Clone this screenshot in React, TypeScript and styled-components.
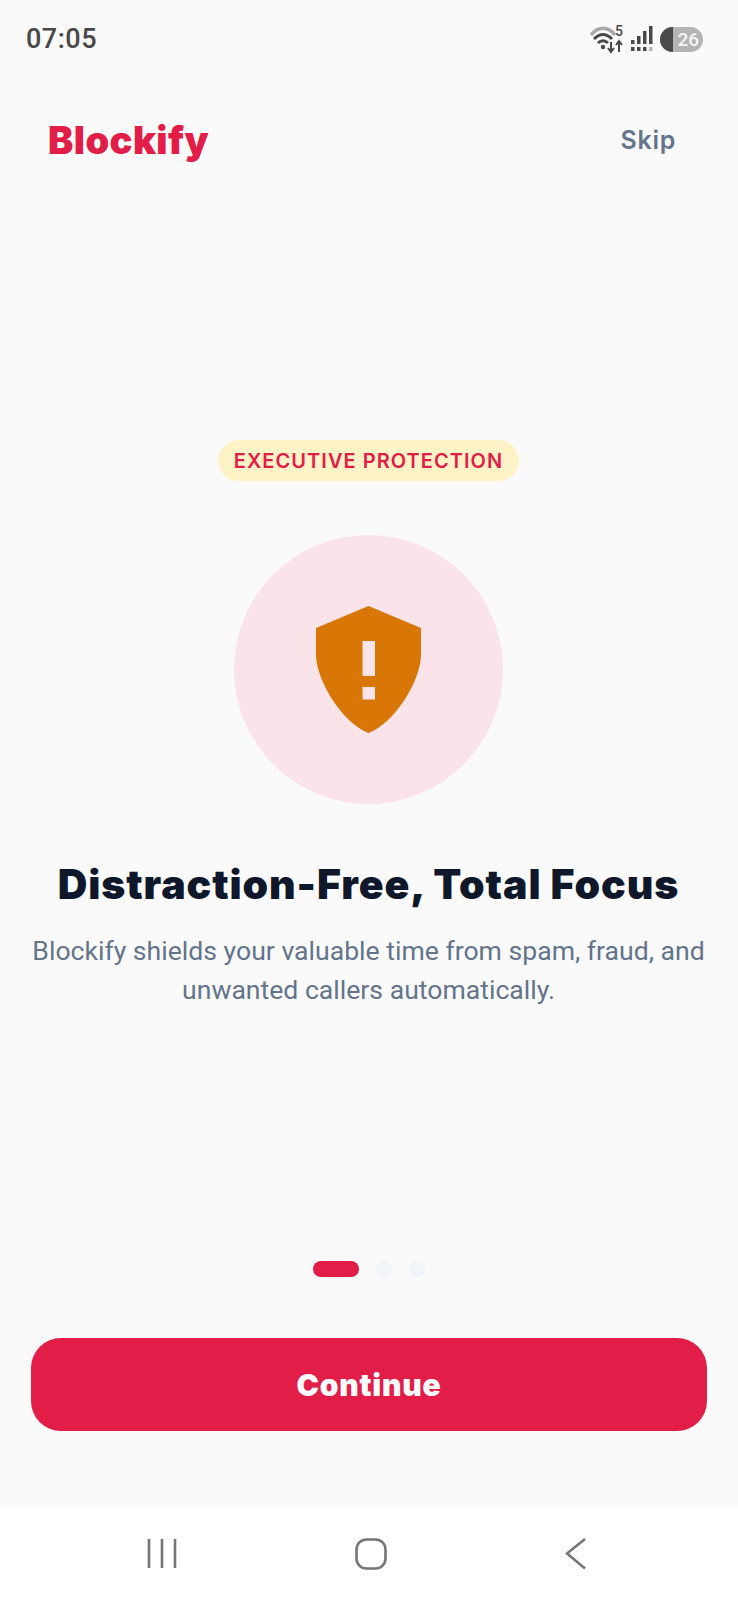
import React, { FC } from 'react';
import styled, { createGlobalStyle } from 'styled-components';

const colors = {
  page: '#fafafa',
  white: '#ffffff',
  brand: '#e11d48',
  slate: '#64748b',
  ink: '#0f172a',
  amberSoft: '#fef3c7',
  amber: '#d97706',
  roseSoft: '#fae4ea',
  dot: '#f1f5f9',
  statusInk: '#484848',
  navInk: '#767676',
};

const GlobalStyle = createGlobalStyle`
  html, body {
    margin: 0;
    padding: 0;
    background: ${colors.page};
  }
  * {
    box-sizing: border-box;
  }
`;

const Screen = styled.div`
  width: 738px;
  height: 1600px;
  display: flex;
  flex-direction: column;
  background: ${colors.page};
  font-family: 'Roboto', 'Liberation Sans', sans-serif;
  overflow: hidden;
`;

const StatusBar = styled.div`
  height: 78px;
  flex: none;
  display: flex;
  align-items: center;
  justify-content: space-between;
  padding: 0 35px 0 26px;
`;

const Clock = styled.span`
  font-size: 27px;
  font-weight: 500;
  letter-spacing: 0.5px;
  color: ${colors.statusInk};
`;

const StatusIcons = styled.div`
  display: flex;
  align-items: center;
  gap: 5px;
`;

const BatteryPill = styled.div`
  position: relative;
  width: 43px;
  height: 25px;
  margin-left: 2px;
  border-radius: 13px;
  background: #b4b4b4;
  overflow: hidden;
  display: flex;
  align-items: center;
  justify-content: flex-end;
  padding-right: 4px;
  font-size: 19px;
  font-weight: 500;
  color: #f4f4f4;

  &::before {
    content: '';
    position: absolute;
    left: 0;
    top: 0;
    bottom: 0;
    width: 13px;
    background: #4a4a4a;
  }
`;

const Header = styled.header`
  height: 78px;
  margin-top: 23px;
  flex: none;
  display: flex;
  align-items: center;
  justify-content: space-between;
  padding: 0 62px 0 48px;
`;

const Logo = styled.div`
  font-family: 'Inter', 'Liberation Sans', sans-serif;
  font-size: 38px;
  font-weight: 900;
  letter-spacing: 0.4px;
  color: ${colors.brand};
`;

const SkipButton = styled.button`
  border: 0;
  padding: 0;
  background: none;
  font-family: 'Inter', 'Liberation Sans', sans-serif;
  font-size: 25px;
  font-weight: 600;
  letter-spacing: 0.7px;
  color: ${colors.slate};
`;

const Hero = styled.main`
  flex: 1;
  display: flex;
  flex-direction: column;
  align-items: center;
  padding: 261px 1px 0 0;
`;

const Badge = styled.div`
  height: 41px;
  width: 301px;
  border-radius: 21px;
  background: ${colors.amberSoft};
  display: flex;
  align-items: center;
  justify-content: center;
  font-family: 'Inter', 'Liberation Sans', sans-serif;
  font-size: 20px;
  font-weight: 600;
  letter-spacing: 1.05px;
  white-space: nowrap;
  color: ${colors.brand};
`;

const IconCircle = styled.div`
  width: 269px;
  height: 269px;
  margin-top: 54px;
  border-radius: 50%;
  background: ${colors.roseSoft};
  display: flex;
  align-items: center;
  justify-content: center;
`;

const Title = styled.h1`
  margin: 52px 0 0;
  font-family: 'Inter', 'Liberation Sans', sans-serif;
  font-size: 41px;
  line-height: 56px;
  font-weight: 900;
  letter-spacing: 0.9px;
  white-space: nowrap;
  color: ${colors.ink};
`;

const Subtitle = styled.p`
  margin: 19px 0 0;
  width: 700px;
  font-size: 26.6px;
  line-height: 39px;
  text-align: center;
  color: ${colors.slate};
`;

const Pager = styled.div`
  flex: none;
  display: flex;
  align-items: center;
  justify-content: center;
  gap: 17px;
  height: 16px;
`;

const PagerDot = styled.span<{ $active?: boolean }>`
  height: 16px;
  width: ${(props) => (props.$active ? '46px' : '16px')};
  border-radius: 8px;
  background: ${(props) => (props.$active ? colors.brand : colors.dot)};
`;

const Footer = styled.div`
  flex: none;
  padding: 61px 31px 76px;
`;

const ContinueButton = styled.button`
  display: block;
  width: 100%;
  height: 93px;
  border: 0;
  border-radius: 30px;
  background: ${colors.brand};
  font-family: 'Inter', 'Liberation Sans', sans-serif;
  font-size: 30px;
  font-weight: 900;
  letter-spacing: 0.8px;
  color: ${colors.white};
`;

const NavBar = styled.nav`
  height: 93px;
  flex: none;
  background: ${colors.white};
  display: flex;
  align-items: center;
  justify-content: space-between;
  padding: 0 151px 0 147px;
`;

const ShieldIcon: FC = () => (
  <svg width="105" height="127" viewBox="0 0 105 127" aria-hidden="true">
    <path
      fill={colors.amber}
      d="M52.5 0 L105 22 V50 C104 75 79 117 52.5 127 C26 117 1 75 0 50 V22 Z"
    />
    <rect x="46.5" y="35" width="12.5" height="35" fill={colors.roseSoft} />
    <rect x="46.5" y="81" width="12.5" height="12.5" fill={colors.roseSoft} />
  </svg>
);

const WifiIcon: FC = () => (
  <svg width="36" height="30" viewBox="0 0 36 30" aria-hidden="true">
    <g fill="none" strokeLinecap="butt">
      <path d="M1 11 C8 2 18 2 25 11" stroke="#a8a8a8" strokeWidth="3.4" />
      <path d="M4 15 C10 9 16 9 22 15" stroke={colors.statusInk} strokeWidth="3" />
      <path d="M8 19 C11 16 15 16 18 19" stroke={colors.statusInk} strokeWidth="3" />
      <path d="M21 18 V27 M18 24 L21 28 L24 24" stroke={colors.statusInk} strokeWidth="2" />
      <path d="M29 28 V18 M26 21 L29 17 L32 21" stroke={colors.statusInk} strokeWidth="2" />
    </g>
    <circle cx="13" cy="23" r="2.2" fill={colors.statusInk} />
    <text x="25" y="12" fontSize="14" fontWeight="500" fontFamily="Roboto, sans-serif" fill={colors.statusInk}>
      5
    </text>
  </svg>
);

const SignalIcon: FC = () => (
  <svg width="22" height="26" viewBox="0 0 22 26" aria-hidden="true">
    <g fill={colors.statusInk}>
      <rect x="0" y="14" width="3.5" height="4" />
      <rect x="0" y="21" width="3.5" height="4" />
      <rect x="6" y="10" width="3.5" height="8" />
      <rect x="6" y="21" width="3.5" height="4" />
      <rect x="12" y="5" width="3.5" height="13" />
      <rect x="12" y="21" width="3.5" height="4" />
      <rect x="18" y="0" width="3.5" height="18" />
    </g>
    <rect x="18" y="21" width="3.5" height="4" fill="#b4b4b4" />
  </svg>
);

const RecentsIcon: FC = () => (
  <svg width="30" height="32" viewBox="0 0 30 32" aria-hidden="true">
    <path d="M2 1 V30 M15 1 V30 M28 1 V30" stroke={colors.navInk} strokeWidth="2.6" fill="none" />
  </svg>
);

const HomeIcon: FC = () => (
  <svg width="32" height="32" viewBox="0 0 32 32" aria-hidden="true">
    <rect x="1.5" y="1.5" width="29" height="29" rx="10" stroke={colors.navInk} strokeWidth="2.6" fill="none" />
  </svg>
);

const BackIcon: FC = () => (
  <svg width="22" height="32" viewBox="0 0 22 32" aria-hidden="true">
    <path d="M20 1 L2 15.5 L20 30.5" stroke={colors.navInk} strokeWidth="2.6" fill="none" />
  </svg>
);

const App: FC = () => {
  return (
    <Screen>
      <GlobalStyle />
      <StatusBar>
        <Clock>07:05</Clock>
        <StatusIcons>
          <WifiIcon />
          <SignalIcon />
          <BatteryPill>26</BatteryPill>
        </StatusIcons>
      </StatusBar>
      <Header>
        <Logo>Blockify</Logo>
        <SkipButton>Skip</SkipButton>
      </Header>
      <Hero>
        <Badge>EXECUTIVE PROTECTION</Badge>
        <IconCircle>
          <ShieldIcon />
        </IconCircle>
        <Title>Distraction-Free, Total Focus</Title>
        <Subtitle>
          Blockify shields your valuable time from spam, fraud, and unwanted callers automatically.
        </Subtitle>
      </Hero>
      <Pager>
        <PagerDot $active />
        <PagerDot />
        <PagerDot />
      </Pager>
      <Footer>
        <ContinueButton>Continue</ContinueButton>
      </Footer>
      <NavBar>
        <RecentsIcon />
        <HomeIcon />
        <BackIcon />
      </NavBar>
    </Screen>
  );
};

export default App;
